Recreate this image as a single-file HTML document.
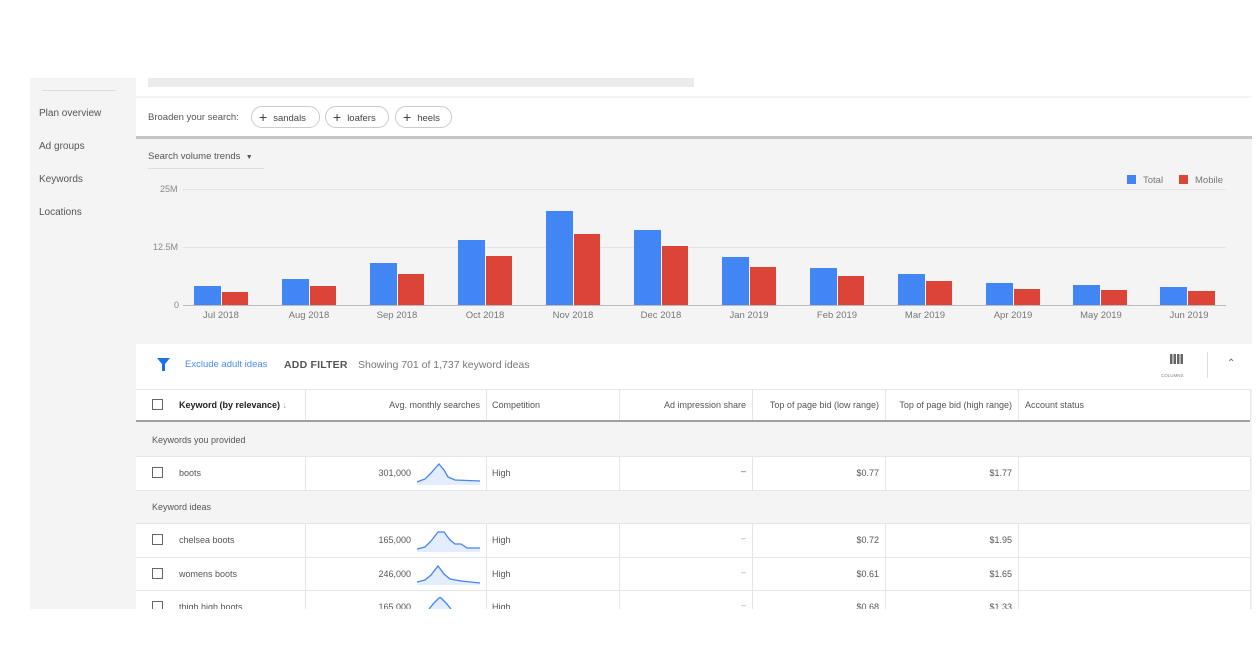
<!DOCTYPE html>
<html><head><meta charset="utf-8"><style>
*{margin:0;padding:0;box-sizing:border-box}
body{width:1259px;height:669px;background:#fff;position:relative;overflow:hidden;font-family:"Liberation Sans",sans-serif;color:#444}
.a{position:absolute}
.t{position:absolute;font-size:9.5px;color:#555;white-space:nowrap}
.chip{position:absolute;top:106px;height:22px;border:1px solid #ccc;border-radius:11px;font-size:9.5px;color:#444;padding:0 0 0 7px;line-height:20px;background:#fff}
.chip b{font-weight:normal;font-size:14px;margin-right:6px;vertical-align:-1px}
.bar{position:absolute}
.B{background:#4285f4}.R{background:#db4437}
.ml{position:absolute;top:310px;font-size:9.5px;color:#777;width:80px;text-align:center}
.vl{position:absolute;background:#e6e6e6;width:1px}
.hl{position:absolute;background:#e6e6e6;height:1px;left:136px;width:1114px}
.cb{position:absolute;width:11px;height:11px;border:1.5px solid #666;left:152px}
.r{text-align:right}
</style></head><body>
<!-- sidebar -->
<div class="a" style="left:30px;top:78px;width:106px;height:531px;background:#f4f4f4"></div>
<div class="a" style="left:42px;top:90px;width:74px;height:1px;background:#ddd"></div>
<div class="t" style="left:39px;top:108px;font-size:10px">Plan overview</div>
<div class="t" style="left:39px;top:141px;font-size:10px">Ad groups</div>
<div class="t" style="left:39px;top:174px;font-size:10px">Keywords</div>
<div class="t" style="left:39px;top:207px;font-size:10px">Locations</div>
<!-- main -->
<div class="a" style="left:136px;top:78px;width:1116px;height:531px;background:#f4f4f4"></div>
<div class="a" style="left:136px;top:78px;width:1116px;height:18px;background:#fff"></div>
<div class="a" style="left:148px;top:78px;width:546px;height:9px;background:#ebebeb"></div>
<div class="a" style="left:136px;top:98px;width:1116px;height:39px;background:#fff"></div>
<div class="a" style="left:136px;top:136px;width:1116px;height:3px;background:#c4c4c4"></div>
<div class="t" style="left:148px;top:112px">Broaden your search:</div>
<div class="chip" style="left:251px;width:69px"><b>+</b>sandals</div>
<div class="chip" style="left:325px;width:64px"><b>+</b>loafers</div>
<div class="chip" style="left:395px;width:57px"><b>+</b>heels</div>
<!-- chart -->
<div class="t" style="left:148px;top:151px">Search volume trends &nbsp;<span style="font-size:7px">▼</span></div>
<div class="a" style="left:148px;top:168px;width:116px;height:1px;background:#ddd"></div>
<div class="a" style="left:1127px;top:175px;width:9px;height:9px;background:#4285f4"></div>
<div class="t" style="left:1143px;top:175px;color:#777">Total</div>
<div class="a" style="left:1179px;top:175px;width:9px;height:9px;background:#db4437"></div>
<div class="t" style="left:1195px;top:175px;color:#777">Mobile</div>
<div class="t" style="left:160px;top:184px;color:#888;font-size:9px">25M</div>
<div class="t" style="left:153px;top:242px;color:#888;font-size:9px">12.5M</div>
<div class="t" style="left:174px;top:300px;color:#888;font-size:9px">0</div>
<div class="a" style="left:183px;top:189px;width:1043px;height:1px;background:#e4e4e4"></div>
<div class="a" style="left:183px;top:247px;width:1043px;height:1px;background:#e4e4e4"></div>
<div class="a" style="left:183px;top:305px;width:1043px;height:1px;background:#bbb"></div>
<div class="bar B" style="left:194px;top:286px;width:27px;height:19px"></div><div class="bar R" style="left:222px;top:292px;width:26px;height:13px"></div><div class="ml" style="left:181px">Jul 2018</div>
<div class="bar B" style="left:282px;top:279px;width:27px;height:26px"></div><div class="bar R" style="left:310px;top:286px;width:26px;height:19px"></div><div class="ml" style="left:269px">Aug 2018</div>
<div class="bar B" style="left:370px;top:263px;width:27px;height:42px"></div><div class="bar R" style="left:398px;top:274px;width:26px;height:31px"></div><div class="ml" style="left:357px">Sep 2018</div>
<div class="bar B" style="left:458px;top:240px;width:27px;height:65px"></div><div class="bar R" style="left:486px;top:256px;width:26px;height:49px"></div><div class="ml" style="left:445px">Oct 2018</div>
<div class="bar B" style="left:546px;top:211px;width:27px;height:94px"></div><div class="bar R" style="left:574px;top:234px;width:26px;height:71px"></div><div class="ml" style="left:533px">Nov 2018</div>
<div class="bar B" style="left:634px;top:230px;width:27px;height:75px"></div><div class="bar R" style="left:662px;top:246px;width:26px;height:59px"></div><div class="ml" style="left:621px">Dec 2018</div>
<div class="bar B" style="left:722px;top:257px;width:27px;height:48px"></div><div class="bar R" style="left:750px;top:267px;width:26px;height:38px"></div><div class="ml" style="left:709px">Jan 2019</div>
<div class="bar B" style="left:810px;top:268px;width:27px;height:37px"></div><div class="bar R" style="left:838px;top:276px;width:26px;height:29px"></div><div class="ml" style="left:797px">Feb 2019</div>
<div class="bar B" style="left:898px;top:274px;width:27px;height:31px"></div><div class="bar R" style="left:926px;top:281px;width:26px;height:24px"></div><div class="ml" style="left:885px">Mar 2019</div>
<div class="bar B" style="left:986px;top:283px;width:27px;height:22px"></div><div class="bar R" style="left:1014px;top:289px;width:26px;height:16px"></div><div class="ml" style="left:973px">Apr 2019</div>
<div class="bar B" style="left:1073px;top:285px;width:27px;height:20px"></div><div class="bar R" style="left:1101px;top:290px;width:26px;height:15px"></div><div class="ml" style="left:1061px">May 2019</div>
<div class="bar B" style="left:1160px;top:287px;width:27px;height:18px"></div><div class="bar R" style="left:1188px;top:291px;width:27px;height:14px"></div><div class="ml" style="left:1149px">Jun 2019</div>
<!-- filter row -->
<div class="a" style="left:136px;top:344px;width:1116px;height:45px;background:#fff"></div>
<svg class="a" style="left:157px;top:358px" width="13" height="13" viewBox="0 0 13 13"><path d="M0 0H13L8 6V13H5V6Z" fill="#1a73e8"/></svg>
<div class="t" style="left:185px;top:359px;color:#4a8af4">Exclude adult ideas</div>
<div class="t" style="left:284px;top:359px;font-size:10.5px;color:#555;font-weight:bold;letter-spacing:.2px">ADD FILTER</div>
<div class="t" style="left:358px;top:359px;font-size:10.5px;color:#777">Showing 701 of 1,737 keyword ideas</div>
<div class="a" style="left:1170px;top:354px;width:13px;height:10px;background:repeating-linear-gradient(90deg,#666 0 2.5px,transparent 2.5px 3.5px)"></div>
<div class="t" style="left:1161px;top:373px;font-size:4.5px;color:#888">COLUMNS</div>
<div class="a" style="left:1207px;top:352px;width:1px;height:26px;background:#ddd"></div>
<div class="t" style="left:1227px;top:358px;font-size:10px;color:#666">⌃</div>
<!-- table -->
<div class="a" style="left:136px;top:389px;width:1114px;height:32px;background:#fff"></div>
<div class="a" style="left:136px;top:420px;width:1114px;height:2px;background:#a0a0a0"></div>
<div class="a" style="left:136px;top:457px;width:1114px;height:33px;background:#fff"></div>
<div class="a" style="left:136px;top:524px;width:1114px;height:85px;background:#fff"></div>
<div class="hl" style="top:389px"></div>
<div class="hl" style="top:456px"></div><div class="hl" style="top:490px"></div>
<div class="hl" style="top:523px"></div><div class="hl" style="top:557px"></div><div class="hl" style="top:590px"></div>
<div class="vl" style="left:305px;top:389px;height:31px"></div><div class="vl" style="left:486px;top:389px;height:31px"></div><div class="vl" style="left:619px;top:389px;height:31px"></div><div class="vl" style="left:752px;top:389px;height:31px"></div><div class="vl" style="left:885px;top:389px;height:31px"></div><div class="vl" style="left:1018px;top:389px;height:31px"></div><div class="vl" style="left:1250px;top:389px;height:31px"></div>
<div class="vl" style="left:305px;top:457px;height:33px"></div><div class="vl" style="left:486px;top:457px;height:33px"></div><div class="vl" style="left:619px;top:457px;height:33px"></div><div class="vl" style="left:752px;top:457px;height:33px"></div><div class="vl" style="left:885px;top:457px;height:33px"></div><div class="vl" style="left:1018px;top:457px;height:33px"></div><div class="vl" style="left:1250px;top:457px;height:33px"></div>
<div class="vl" style="left:305px;top:524px;height:85px"></div><div class="vl" style="left:486px;top:524px;height:85px"></div><div class="vl" style="left:619px;top:524px;height:85px"></div><div class="vl" style="left:752px;top:524px;height:85px"></div><div class="vl" style="left:885px;top:524px;height:85px"></div><div class="vl" style="left:1018px;top:524px;height:85px"></div><div class="vl" style="left:1250px;top:524px;height:85px"></div>
<div class="cb" style="top:399px"></div>
<div class="t" style="left:179px;top:400px;font-size:9px;color:#222;font-weight:bold">Keyword (by relevance) <span style="color:#aaa;font-weight:normal">↓</span></div>
<div class="t r" style="left:305px;width:175px;top:400px;font-size:9px">Avg. monthly searches</div>
<div class="t" style="left:492px;top:400px;font-size:9px">Competition</div>
<div class="t r" style="left:619px;width:127px;top:400px;font-size:9px">Ad impression share</div>
<div class="t r" style="left:752px;width:127px;top:400px;font-size:9px">Top of page bid (low range)</div>
<div class="t r" style="left:885px;width:127px;top:400px;font-size:9px">Top of page bid (high range)</div>
<div class="t" style="left:1025px;top:400px;font-size:9px">Account status</div>
<div class="t" style="left:152px;top:435px;font-size:9px">Keywords you provided</div>
<div class="t" style="left:152px;top:502px;font-size:9px">Keyword ideas</div>
<!-- rows -->
<div class="cb" style="top:467px"></div><div class="t" style="left:179px;top:468px;font-size:9px">boots</div>
<div class="t r" style="left:305px;width:106px;top:468px;font-size:9px">301,000</div>
<div class="t" style="left:492px;top:468px;font-size:9px">High</div>
<div class="t r" style="left:619px;width:127px;top:466px;font-size:9px">–</div>
<div class="t r" style="left:752px;width:127px;top:468px;font-size:9px">$0.77</div>
<div class="t r" style="left:885px;width:127px;top:468px;font-size:9px">$1.77</div>
<div class="cb" style="top:534px"></div><div class="t" style="left:179px;top:535px;font-size:9px">chelsea boots</div>
<div class="t r" style="left:305px;width:106px;top:535px;font-size:9px">165,000</div>
<div class="t" style="left:492px;top:535px;font-size:9px">High</div>
<div class="t r" style="left:619px;width:127px;top:533px;font-size:9px;color:#aaa">–</div>
<div class="t r" style="left:752px;width:127px;top:535px;font-size:9px">$0.72</div>
<div class="t r" style="left:885px;width:127px;top:535px;font-size:9px">$1.95</div>
<div class="cb" style="top:568px"></div><div class="t" style="left:179px;top:569px;font-size:9px">womens boots</div>
<div class="t r" style="left:305px;width:106px;top:569px;font-size:9px">246,000</div>
<div class="t" style="left:492px;top:569px;font-size:9px">High</div>
<div class="t r" style="left:619px;width:127px;top:567px;font-size:9px;color:#aaa">–</div>
<div class="t r" style="left:752px;width:127px;top:569px;font-size:9px">$0.61</div>
<div class="t r" style="left:885px;width:127px;top:569px;font-size:9px">$1.65</div>
<div class="cb" style="top:601px"></div><div class="t" style="left:179px;top:602px;font-size:9px">thigh high boots</div>
<div class="t r" style="left:305px;width:106px;top:602px;font-size:9px">165,000</div>
<div class="t" style="left:492px;top:602px;font-size:9px">High</div>
<div class="t r" style="left:619px;width:127px;top:600px;font-size:9px;color:#aaa">–</div>
<div class="t r" style="left:752px;width:127px;top:602px;font-size:9px">$0.68</div>
<div class="t r" style="left:885px;width:127px;top:602px;font-size:9px">$1.33</div>
<svg class="a" style="left:417px;top:461px" width="63" height="24"><path d="M0 21L8 18L14 12L22 3L27 9L31 16L38 19L63 20V24H0Z" fill="#e3edfd"/><path d="M0 21L8 18L14 12L22 3L27 9L31 16L38 19L63 20" fill="none" stroke="#4285f4" stroke-width="1.3"/></svg>
<svg class="a" style="left:417px;top:530px" width="63" height="22"><path d="M0 19L8 17L14 11L21 2L27 2L33 10L38 14L44 14L50 18L63 18V22H0Z" fill="#e3edfd"/><path d="M0 19L8 17L14 11L21 2L27 2L33 10L38 14L44 14L50 18L63 18" fill="none" stroke="#4285f4" stroke-width="1.3"/></svg>
<svg class="a" style="left:417px;top:563px" width="63" height="22"><path d="M0 19L8 17L14 12L21 3L27 11L33 16L44 18L63 20V22H0Z" fill="#e3edfd"/><path d="M0 19L8 17L14 12L21 3L27 11L33 16L44 18L63 20" fill="none" stroke="#4285f4" stroke-width="1.3"/></svg>
<svg class="a" style="left:417px;top:597px" width="63" height="12"><path d="M12 12L17 6L23 0L29 6L34 12" fill="#e3edfd" stroke="#4285f4" stroke-width="1.3"/></svg>
<div class="a" style="left:0;top:609px;width:1259px;height:60px;background:#fff"></div>
</body></html>
